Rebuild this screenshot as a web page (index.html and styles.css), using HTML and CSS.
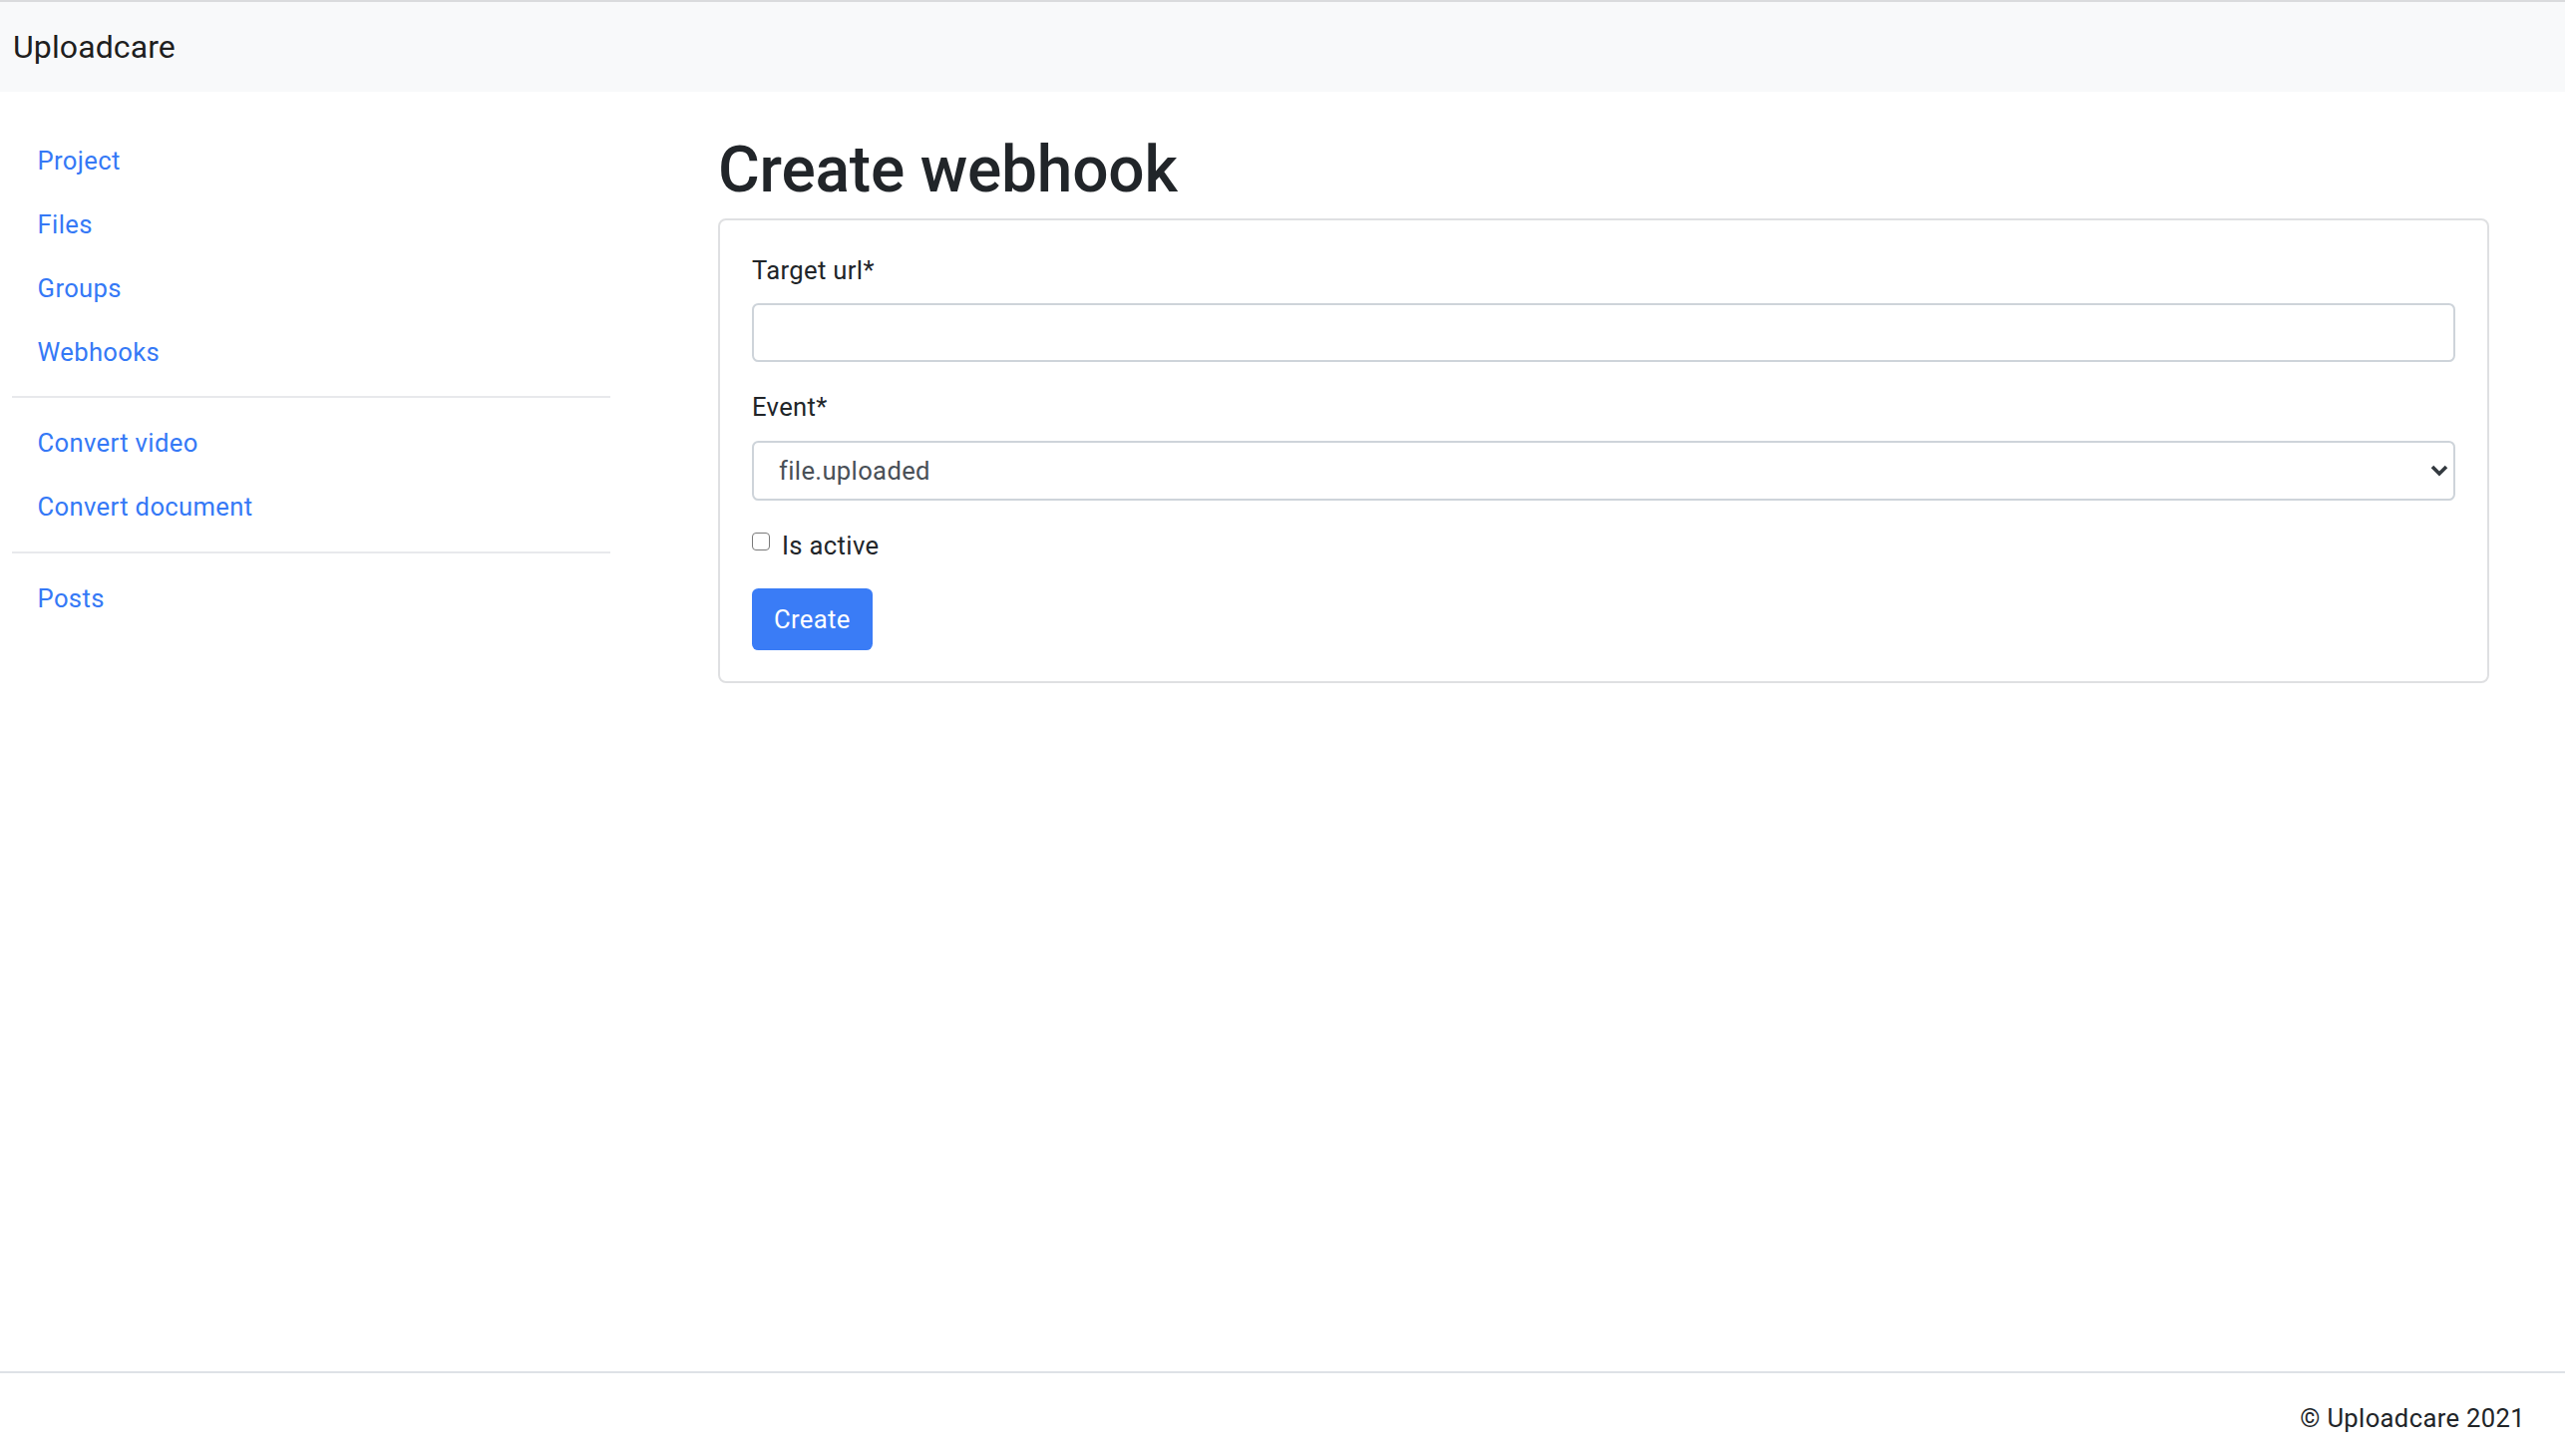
FILE: index.html
```html
<!DOCTYPE html>
<html lang="en">
<head>
<meta charset="utf-8">
<title>Create webhook</title>
<link rel="stylesheet" href="styles.css">
</head>
<body>
<header class="navbar"><span class="brand">Uploadcare</span></header>
<div class="layout">
  <nav class="sidebar">
    <a class="nav-link" href="#">Project</a>
    <a class="nav-link" href="#">Files</a>
    <a class="nav-link" href="#">Groups</a>
    <a class="nav-link" href="#">Webhooks</a>
    <hr class="divider divider-first">
    <a class="nav-link" href="#">Convert video</a>
    <a class="nav-link" href="#">Convert document</a>
    <hr class="divider">
    <a class="nav-link" href="#">Posts</a>
  </nav>
  <main class="content">
    <h1 class="title">Create webhook</h1>
    <div class="card">
      <form class="card-body">
        <div class="field">
          <label class="label" for="url">Target url*</label>
          <input class="control input" id="url" type="text">
        </div>
        <div class="field">
          <label class="label" for="event">Event*</label>
          <div class="select-wrap">
            <select class="control select" id="event"><option>file.uploaded</option></select>
            <svg class="chevron" width="20" height="14" viewBox="0 0 20 14"><path d="M3 3 L10 10 L17 3" fill="none" stroke="#343a40" stroke-width="3.6" stroke-linejoin="miter"/></svg>
          </div>
        </div>
        <div class="check">
          <input class="checkbox" id="active" type="checkbox">
          <label class="check-label" for="active">Is active</label>
        </div>
        <button class="btn" type="button">Create</button>
      </form>
    </div>
  </main>
</div>
<footer class="footer"><span>© Uploadcare 2021</span></footer>
</body>
</html>
```
FILE: styles.css
```css
html, body {
  margin: 0;
  padding: 0;
}
body {
  font-family: Roboto, "Liberation Sans", Arial, sans-serif;
  font-size: 25.6px;
  line-height: 38.4px;
  letter-spacing: 0.35px;
  color: #212529;
  background: #fff;
  min-height: 100vh;
  display: flex;
  flex-direction: column;
}
.navbar {
  box-sizing: border-box;
  height: 92px;
  border-top: 2px solid #dadbdd;
  background: #f8f9fa;
  display: flex;
  align-items: center;
  padding-left: 13px;
}
.brand {
  font-size: 32px;
  line-height: 48px;
  letter-spacing: 0.1px;
  color: rgba(0, 0, 0, 0.9);
}
.layout {
  flex: 1;
  display: flex;
  align-items: flex-start;
}
.sidebar {
  width: 600px;
  margin-left: 12px;
  padding-top: 37.5px;
  display: flex;
  flex-direction: column;
}
.nav-link {
  display: block;
  padding: 12.8px 25.6px;
  color: #3579f6;
  text-decoration: none;
}
.divider {
  border: 0;
  border-top: 2px solid #e8e9ec;
  height: 0;
  margin: 13px 0;
}
.divider-first {
  margin-top: 11.5px;
}
.content {
  flex: 1;
  margin-left: 108px;
  margin-right: 76px;
  padding-top: 41px;
}
.title {
  margin: 0 0 9px;
  font-size: 64px;
  line-height: 76.8px;
  font-weight: 500;
  letter-spacing: -0.2px;
  color: #212529;
}
.card {
  border: 2px solid #dfe0e2;
  border-radius: 8px;
  background: #fff;
}
.card-body {
  padding: 31px 32px 31px;
  margin: 0;
}
.field {
  margin-bottom: 26px;
}
.label {
  display: block;
  margin-bottom: 14px;
}
.control {
  display: block;
  box-sizing: border-box;
  width: 100%;
  border: 2px solid #ced4da;
  border-radius: 6.4px;
  background: #fff;
  font-family: inherit;
  font-size: 25.6px;
  letter-spacing: 0.35px;
  margin: 0;
}
.input {
  height: 59px;
  padding: 0 20px;
  color: #212529;
}
.select-wrap {
  position: relative;
}
.select {
  height: 60px;
  padding: 0 40px 0 25px;
  color: #495057;
  -webkit-appearance: none;
  appearance: none;
}
.chevron {
  position: absolute;
  right: 6px;
  top: 23px;
  pointer-events: none;
}
.check {
  display: flex;
  align-items: flex-start;
  margin-bottom: 24px;
}
.checkbox {
  -webkit-appearance: none;
  appearance: none;
  box-sizing: border-box;
  width: 18px;
  height: 18px;
  margin: 6px 12px 0 0;
  border: 1.6px solid #7a7a7a;
  border-radius: 4px;
  background: #fff;
}
.btn {
  display: block;
  height: 61.5px;
  padding: 0 22px;
  border: 0;
  border-radius: 6.4px;
  background: #3a7cf6;
  color: #fff;
  font-family: inherit;
  font-size: 25.6px;
  line-height: 38.4px;
  letter-spacing: 0.35px;
}
.footer {
  box-sizing: border-box;
  height: 85px;
  border-top: 2px solid #dee2e6;
  padding: 26px 40px 0 0;
  text-align: right;
  color: #212529;
}
```
